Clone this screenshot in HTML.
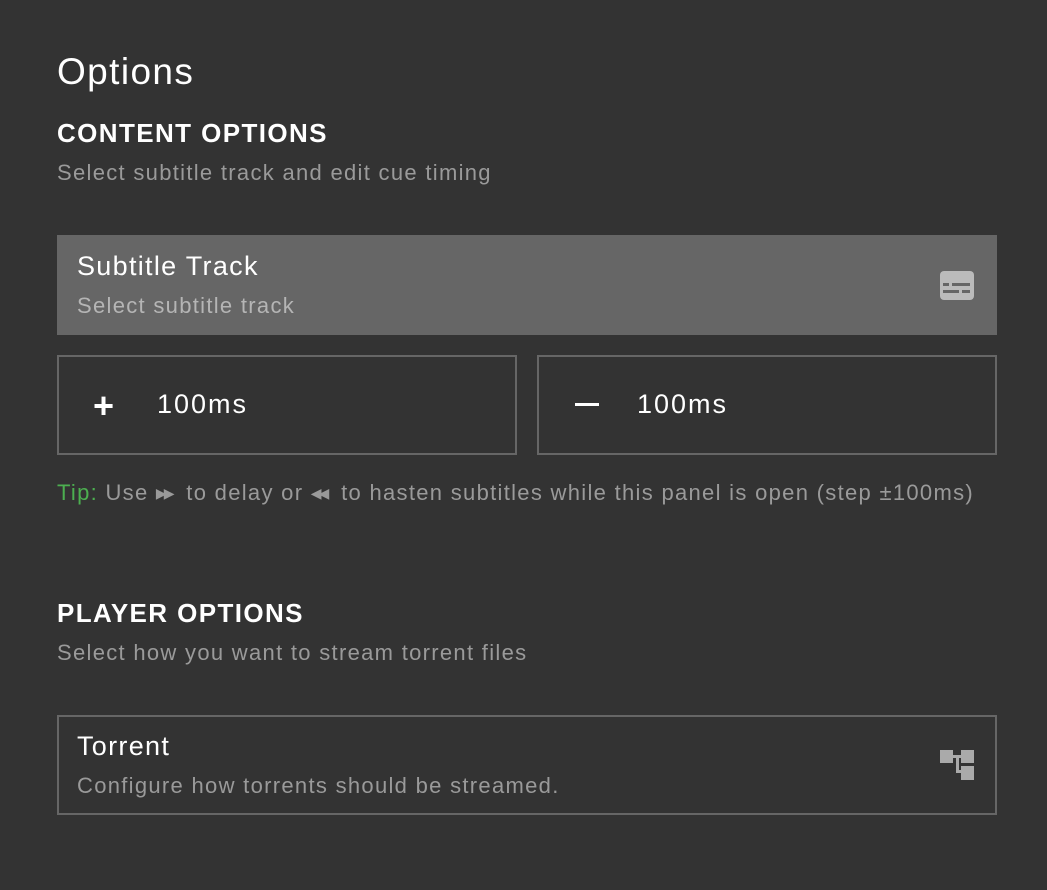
<!DOCTYPE html>
<html><head><meta charset="utf-8"><style>
body{margin:0;background:#333;width:1047px;height:890px;overflow:hidden;font-family:"Liberation Sans",sans-serif;color:#fff;position:relative}
.a{position:absolute;white-space:nowrap}
.h1{left:57px;top:51px;font-size:37px;letter-spacing:1.4px}
.h2{font-size:26px;font-weight:bold;left:57px;letter-spacing:1.4px}
.sub{font-size:22px;color:#9a9a9a;left:57px;letter-spacing:1.3px}
.box{position:absolute;box-sizing:border-box;border:2px solid #666}
</style></head><body>
<div class="a h1">Options</div>
<div class="a h2" style="top:118px">CONTENT OPTIONS</div>
<div class="a sub" style="top:160px">Select subtitle track and edit cue timing</div>
<div class="a" style="left:57px;top:235px;width:940px;height:100px;background:#666"></div>
<div class="a" style="left:77px;top:251px;font-size:27px;letter-spacing:1.3px">Subtitle Track</div>
<div class="a" style="left:77px;top:293px;font-size:22px;color:#b5b5b5;letter-spacing:1.3px">Select subtitle track</div>
<svg class="a" style="left:939px;top:270px" width="36" height="31" viewBox="0 0 36 31"><rect x="1" y="1" width="34" height="29" rx="4" fill="#bbb"/><rect x="4" y="13" width="6" height="3" fill="#666"/><rect x="13" y="13" width="18" height="3" fill="#666"/><rect x="4" y="20" width="16" height="3" fill="#666"/><rect x="23" y="20" width="8" height="3" fill="#666"/></svg>
<div class="box" style="left:57px;top:355px;width:460px;height:100px"></div>
<div class="box" style="left:537px;top:355px;width:460px;height:100px"></div>
<div class="a" style="left:93px;top:385px;font-size:36px;font-weight:bold">+</div>
<div class="a" style="left:157px;top:389px;font-size:27px;letter-spacing:2px">100ms</div>
<div class="a" style="left:575px;top:403px;width:24px;height:3px;background:#fff"></div>
<div class="a" style="left:637px;top:389px;font-size:27px;letter-spacing:2px">100ms</div>
<div class="a" style="left:57px;top:480px;font-size:22px;color:#9a9a9a;letter-spacing:1.3px"><span style="color:#4caf50">Tip:</span> Use <span style="font-size:14px;letter-spacing:-3px;vertical-align:2px">▶▶</span>&nbsp;&nbsp;to delay or <span style="font-size:14px;letter-spacing:-3px;vertical-align:2px">◀◀</span>&nbsp;&nbsp;to hasten subtitles while this panel is open (step ±100ms)</div>
<div class="a h2" style="top:598px">PLAYER OPTIONS</div>
<div class="a sub" style="top:640px">Select how you want to stream torrent files</div>
<div class="box" style="left:57px;top:715px;width:940px;height:100px"></div>
<div class="a" style="left:77px;top:731px;font-size:27px;letter-spacing:1.3px">Torrent</div>
<div class="a" style="left:77px;top:773px;font-size:22px;color:#9a9a9a;letter-spacing:1.3px">Configure how torrents should be streamed.</div>
<svg class="a" style="left:939px;top:749px" width="36" height="32" viewBox="0 0 36 32"><g fill="#aaa"><rect x="1" y="1" width="13" height="13"/><rect x="22" y="1" width="13" height="13"/><rect x="22" y="17" width="13" height="14"/><rect x="14" y="6" width="8" height="3"/><rect x="17" y="6" width="3" height="17"/><rect x="17" y="21" width="5" height="3"/></g></svg>
</body></html>
